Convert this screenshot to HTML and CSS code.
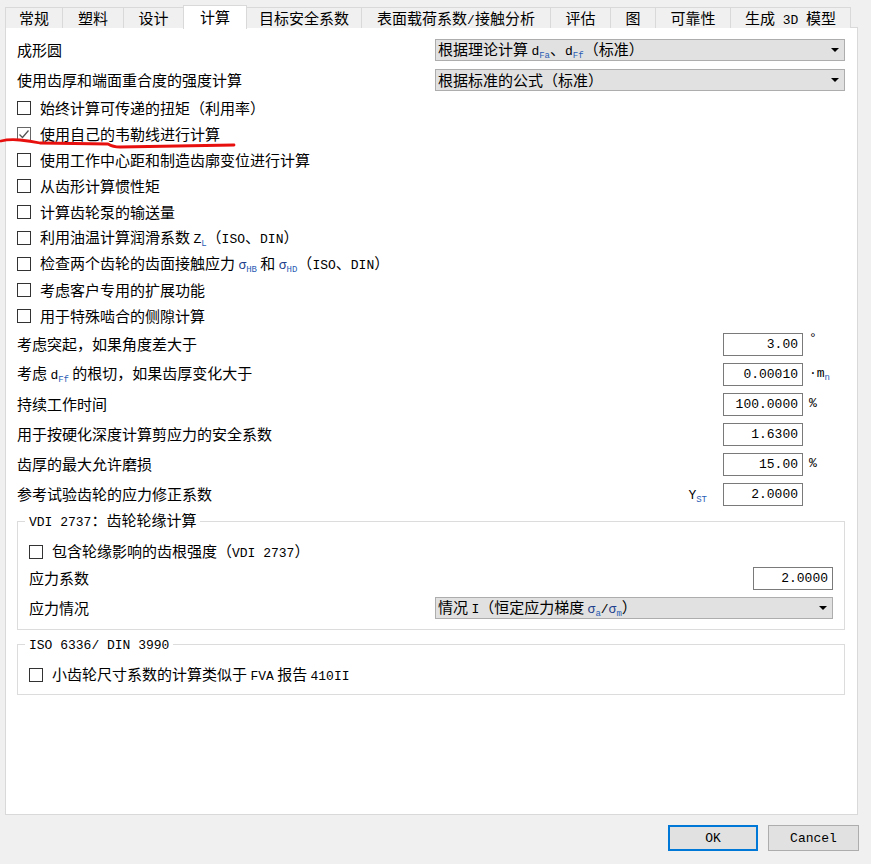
FILE: index.html
```html
<!DOCTYPE html>
<html>
<head>
<meta charset="utf-8">
<title>计算</title>
<link rel="stylesheet" href="styles.css">
</head>
<body>
	<div class="tabs">
		<div class="tab">常规</div>
		<div class="tab">塑料</div>
		<div class="tab">设计</div>
		<div class="tab on">计算</div>
		<div class="tab">目标安全系数</div>
		<div class="tab">表面载荷系数<span class="m">/</span>接触分析</div>
		<div class="tab">评估</div>
		<div class="tab">图</div>
		<div class="tab">可靠性</div>
		<div class="tab">生成<span class="m"> 3D </span>模型</div>
	</div>

	<div class="panel">
		<div class="row sel">
			<span class="lbl">成形圆</span>
			<div class="combo"><span class="val">根据理论计算 <span class="m">d</span><sub class="ix">Fa</sub>、<span class="m">d</span><sub class="ix">Ff</sub>（标准）</span><i class="arrow"></i></div>
		</div>
		<div class="row sel">
			<span class="lbl">使用齿厚和端面重合度的强度计算</span>
			<div class="combo"><span class="val">根据标准的公式（标准）</span><i class="arrow"></i></div>
		</div>

		<div class="row chk"><span class="box"></span><span class="txt">始终计算可传递的扭矩（利用率）</span></div>
		<div class="row chk"><span class="box checked"><svg width="12" height="12" viewBox="0 0 12 12"><path d="M1.5 6.5 L4.5 9.5 L10.5 2.5" fill="none" stroke="#555" stroke-width="1.3"/></svg></span><span class="txt">使用自己的韦勒线进行计算</span></div>
		<div class="row chk"><span class="box"></span><span class="txt">使用工作中心距和制造齿廓变位进行计算</span></div>
		<div class="row chk"><span class="box"></span><span class="txt">从齿形计算惯性矩</span></div>
		<div class="row chk"><span class="box"></span><span class="txt">计算齿轮泵的输送量</span></div>
		<div class="row chk"><span class="box"></span><span class="txt">利用油温计算润滑系数 <span class="m">Z</span><sub class="ix">L</sub>（<span class="m">ISO</span>、<span class="m">DIN</span>）</span></div>
		<div class="row chk"><span class="box"></span><span class="txt">检查两个齿轮的齿面接触应力 <span class="m sg">σ</span><sub class="ix">HB</sub> 和 <span class="m sg">σ</span><sub class="ix">HD</sub>（<span class="m">ISO</span>、<span class="m">DIN</span>）</span></div>
		<div class="row chk"><span class="box"></span><span class="txt">考虑客户专用的扩展功能</span></div>
		<div class="row chk"><span class="box"></span><span class="txt">用于特殊啮合的侧隙计算</span></div>

		<div class="row fld">
			<span class="lbl">考虑突起，如果角度差大于</span>
			<span class="num">3.00</span><span class="unit"><span class="deg">°</span></span>
		</div>
		<div class="row fld">
			<span class="lbl">考虑 <span class="m">d</span><sub class="ix">Ff</sub> 的根切，如果齿厚变化大于</span>
			<span class="num">0.00010</span><span class="unit"><span class="m">·m</span><sub class="ix">n</sub></span>
		</div>
		<div class="row fld">
			<span class="lbl">持续工作时间</span>
			<span class="num">100.0000</span><span class="unit">%</span>
		</div>
		<div class="row fld">
			<span class="lbl">用于按硬化深度计算剪应力的安全系数</span>
			<span class="num">1.6300</span><span class="unit"></span>
		</div>
		<div class="row fld">
			<span class="lbl">齿厚的最大允许磨损</span>
			<span class="num">15.00</span><span class="unit">%</span>
		</div>
		<div class="row fld">
			<span class="lbl">参考试验齿轮的应力修正系数</span>
			<span class="sym"><span class="m">Y</span><sub class="ix">ST</sub></span>
			<span class="num">2.0000</span><span class="unit"></span>
		</div>

		<fieldset class="grp vdi">
			<legend><span class="m">VDI 2737</span>：齿轮轮缘计算</legend>
			<div class="row chk"><span class="box"></span><span class="txt">包含轮缘影响的齿根强度（<span class="m">VDI 2737</span>）</span></div>
			<div class="row fld short">
				<span class="lbl">应力系数</span>
				<span class="num">2.0000</span>
			</div>
			<div class="row sel tall">
				<span class="lbl">应力情况</span>
				<div class="combo narrow"><span class="val">情况 <span class="m">I</span>（恒定应力梯度 <span class="m sg">σ</span><sub class="ix">a</sub><span class="m">/</span><span class="m sg">σ</span><sub class="ix">m</sub>）</span><i class="arrow"></i></div>
			</div>
		</fieldset>

		<fieldset class="grp iso">
			<legend><span class="m">ISO 6336/ DIN 3990</span></legend>
			<div class="row chk"><span class="box"></span><span class="txt">小齿轮尺寸系数的计算类似于 <span class="m">FVA</span> 报告 <span class="m">410II</span></span></div>
		</fieldset>
	</div>

	<div class="buttons">
		<button class="btn def">OK</button>
		<button class="btn">Cancel</button>
	</div>

	<svg class="mark" width="240" height="20" viewBox="0 130 240 20">
		<path d="M1 141 Q 9 139 20 140 Q 30 141 40 143 L 108 144 Q 113 147 120 147 L 234 145" fill="none" stroke="#e8100e" stroke-width="2.8" stroke-linecap="round"/>
	</svg>
</body>
</html>
```

FILE: styles.css
```css
html, body {margin:0; padding:0;}
body {position:relative; width:871px; height:864px; overflow:hidden; background:#f0f0f0; color:#000; font-family:"Noto Sans CJK SC", "Liberation Sans", sans-serif; font-size:15px; line-height:20px;}

.m {font-family:"Liberation Mono", "Noto Sans CJK SC", monospace; font-size:13px;}
.sg {color:#1e3f8c;}
sub.ix {font-family:"Liberation Mono", monospace; font-size:9px; line-height:0; vertical-align:-3px; color:#2a5cb4;}

/* tabs */
.tabs {display:flex; align-items:flex-end; height:28px; padding-left:5px; box-sizing:border-box;}
.tab {height:21px; margin-right:-1px; border:1px solid #d9d9d9; border-bottom:none; box-sizing:border-box; background:#f0f0f0; line-height:19px; white-space:nowrap; text-align:center;}
.tab.on {height:24px; margin-bottom:-1px; background:#fff; position:relative; z-index:1; line-height:21px;}
.tab:nth-child(1) {width:58px;}
.tab:nth-child(2) {width:62px;}
.tab:nth-child(3) {width:61px;}
.tab:nth-child(4) {width:64px;}
.tab:nth-child(5) {width:116px;}
.tab:nth-child(6) {width:190px;}
.tab:nth-child(7) {width:61px;}
.tab:nth-child(8) {width:46px;}
.tab:nth-child(9) {width:76px;}
.tab:nth-child(10) {width:121px;}

/* main panel */
.panel {margin:-1px 0 0 5px; width:853px; height:788px; box-sizing:border-box; border:1px solid #d9d9d9; background:#fff; padding:7px 12px 0 11px;}

.row {display:flex; align-items:center; white-space:nowrap;}
.row.sel {height:30px;}
.row.chk {height:26px;}
.row.fld {height:30px;}
.row.fld.short {height:26px;}
.row.sel.tall {height:34px;}
.lbl, .txt {flex:1;}

.box {display:inline-flex; align-items:center; justify-content:center; width:14px; height:14px; box-sizing:border-box; border:1px solid #333; background:#fff; margin-right:9px;}
.box.checked {border-color:#666;}

.combo {display:flex; align-items:center; width:410px; height:22px; box-sizing:border-box; border:1px solid #adadad; background:#e1e1e1; padding:0 5px 0 2px;}
.combo .val {flex:1;}
.arrow {width:0; height:0; border-left:4px solid transparent; border-right:4px solid transparent; border-top:4px solid #000;}

.num {width:80px; height:23px; box-sizing:border-box; border:1px solid #7a7a7a; background:#fff; text-align:right; padding-right:4px; font-family:"Liberation Mono", monospace; font-size:13px; line-height:21px;}
.unit {width:42px; box-sizing:border-box; padding-left:6px; font-family:"Liberation Mono", monospace; font-size:13px;}
.deg {position:relative; top:-5px;}
.sym {margin-right:16px;}

/* groups */
.grp {margin:0; border:1px solid #dcdcdc; padding:6px 11px 4px 11px; min-width:0;}
.grp legend {padding:0 4px; margin-left:-4px; line-height:20px;}
.grp.vdi {margin-top:1px;}
.grp.iso {margin-top:3px; padding-top:6px; padding-bottom:6px;}
.combo.narrow {width:398px;}

/* bottom buttons */
.buttons {display:flex; justify-content:flex-end; gap:10px; padding:10px 12px 0 0;}
.btn {height:26px; box-sizing:border-box; background:#e1e1e1; border:1px solid #adadad; font-family:"Liberation Mono", monospace; font-size:13px; font-weight:normal; color:#000; padding:0; width:91px;}
.btn.def {border:2px solid #0078d7; width:90px;}

.mark {position:absolute; left:0; top:130px;}
```
